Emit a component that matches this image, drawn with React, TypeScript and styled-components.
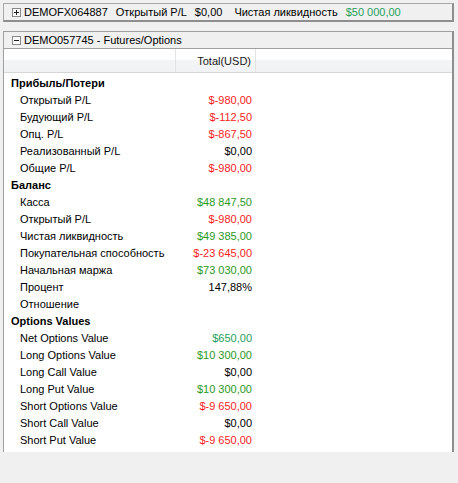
import styled, { createGlobalStyle } from 'styled-components'

const GlobalStyle = createGlobalStyle`
  html, body {
    margin: 0;
    padding: 0;
    background: #f0f0f0;
  }
  body {
    font-family: 'Liberation Sans', Arial, sans-serif;
    font-size: 11px;
    color: #000;
  }
`

const Page = styled.div`
  width: 458px;
  height: 483px;
  padding: 3px 4px 0 3px;
  box-sizing: border-box;
  overflow: hidden;
`

const TopBar = styled.div`
  display: flex;
  align-items: center;
  gap: 8px;
  height: 19px;
  box-sizing: border-box;
  padding-left: 8px;
  border: 1px solid #a8a8a8;
  border-right: 2px solid #8e8e8e;
  border-bottom: 2px solid #8e8e8e;
  background: #f0f0f0;
`

const Title = styled.div`
  display: flex;
  align-items: center;
  gap: 2px;
  white-space: nowrap;
`

const Pair = styled.div`
  display: flex;
  gap: 8px;
  margin-right: 4px;
  white-space: nowrap;
`

const Value = styled.span<{ $tone?: 'red' | 'green' | 'teal' | 'black' }>`
  color: ${({ $tone }) =>
    $tone === 'red' ? '#f71c1c' : $tone === 'green' ? '#2b9a1e' : $tone === 'teal' ? '#1fa05a' : '#000'};
`

const Panel = styled.div`
  margin-top: 9px;
  height: 421px;
  box-sizing: border-box;
  border-left: 1px solid #a0a0a0;
  border-top: 1px solid #a0a0a0;
  border-right: 2px solid #8e8e8e;
  background: #fff;
  display: flex;
  flex-direction: column;
`

const PanelTitle = styled.div`
  display: flex;
  align-items: center;
  height: 16px;
  padding-left: 8px;
  background: #f0f0f0;
  border-bottom: 1px solid #a0a0a0;
`

const HeaderRow = styled.div`
  display: grid;
  grid-template-columns: 172px 80px 1fr;
  height: 23px;
  background: linear-gradient(to bottom, #ffffff 0%, #ffffff 45%, #f3f4f6 50%, #f1f2f4 100%);
  border-bottom: 1px solid #d6d6d6;
`

const HeaderCell = styled.div<{ $align?: 'right' }>`
  display: flex;
  align-items: center;
  justify-content: ${({ $align }) => ($align === 'right' ? 'flex-end' : 'flex-start')};
  padding-right: 4px;
  border-right: 1px solid #e3e3e3;
  color: #1a1a1a;
  &:last-child {
    border-right: none;
  }
`

const Body = styled.div`
  padding-top: 1px;
`

const Row = styled.div`
  display: grid;
  grid-template-columns: 172px 80px 1fr;
  height: 17px;
  align-items: center;
  white-space: nowrap;
`

const Label = styled.div<{ $section?: boolean }>`
  padding-left: ${({ $section }) => ($section ? '7px' : '16px')};
  font-weight: ${({ $section }) => ($section ? 'bold' : 'normal')};
`

const Cell = styled.div`
  text-align: right;
  padding-right: 4px;
`

function ToggleIcon({ open }: { open?: boolean }) {
  return (
    <svg width="9" height="9" viewBox="0 0 9 9" style={{ display: 'block', marginRight: 1 }}>
      <rect x="0.5" y="0.5" width="8" height="8" fill="#fbfbfb" stroke="#8a8a8a" />
      <line x1="2" y1="4.5" x2="7" y2="4.5" stroke="#222" />
      {!open && <line x1="4.5" y1="2" x2="4.5" y2="7" stroke="#222" />}
    </svg>
  )
}

type Tone = 'red' | 'green' | 'teal' | 'black'
type Line = { label: string; value?: string; tone?: Tone; section?: boolean }

const lines: Line[] = [
  { label: 'Прибыль/Потери', section: true },
  { label: 'Открытый P/L', value: '$-980,00', tone: 'red' },
  { label: 'Будующий P/L', value: '$-112,50', tone: 'red' },
  { label: 'Опц. P/L', value: '$-867,50', tone: 'red' },
  { label: 'Реализованный P/L', value: '$0,00', tone: 'black' },
  { label: 'Общие P/L', value: '$-980,00', tone: 'red' },
  { label: 'Баланс', section: true },
  { label: 'Касса', value: '$48 847,50', tone: 'green' },
  { label: 'Открытый P/L', value: '$-980,00', tone: 'red' },
  { label: 'Чистая ликвидность', value: '$49 385,00', tone: 'green' },
  { label: 'Покупательная способность', value: '$-23 645,00', tone: 'red' },
  { label: 'Начальная маржа', value: '$73 030,00', tone: 'green' },
  { label: 'Процент', value: '147,88%', tone: 'black' },
  { label: 'Отношение' },
  { label: 'Options Values', section: true },
  { label: 'Net Options Value', value: '$650,00', tone: 'teal' },
  { label: 'Long Options Value', value: '$10 300,00', tone: 'green' },
  { label: 'Long Call Value', value: '$0,00', tone: 'black' },
  { label: 'Long Put Value', value: '$10 300,00', tone: 'green' },
  { label: 'Short Options Value', value: '$-9 650,00', tone: 'red' },
  { label: 'Short Call Value', value: '$0,00', tone: 'black' },
  { label: 'Short Put Value', value: '$-9 650,00', tone: 'red' },
]

export default function App() {
  return (
    <Page>
      <GlobalStyle />
      <TopBar>
        <Title>
          <ToggleIcon />
          DEMOFX064887
        </Title>
        <Pair>
          <span>Открытый P/L</span>
          <Value>$0,00</Value>
        </Pair>
        <Pair>
          <span>Чистая ликвидность</span>
          <Value $tone="teal">$50 000,00</Value>
        </Pair>
      </TopBar>
      <Panel>
        <PanelTitle>
          <Title>
            <ToggleIcon open />
            DEMO057745 - Futures/Options
          </Title>
        </PanelTitle>
        <HeaderRow>
          <HeaderCell />
          <HeaderCell $align="right">Total(USD)</HeaderCell>
          <HeaderCell />
        </HeaderRow>
        <Body>
          {lines.map((l, i) => (
            <Row key={i}>
              <Label $section={l.section}>{l.label}</Label>
              <Cell>{l.value && <Value $tone={l.tone}>{l.value}</Value>}</Cell>
              <div />
            </Row>
          ))}
        </Body>
      </Panel>
    </Page>
  )
}
